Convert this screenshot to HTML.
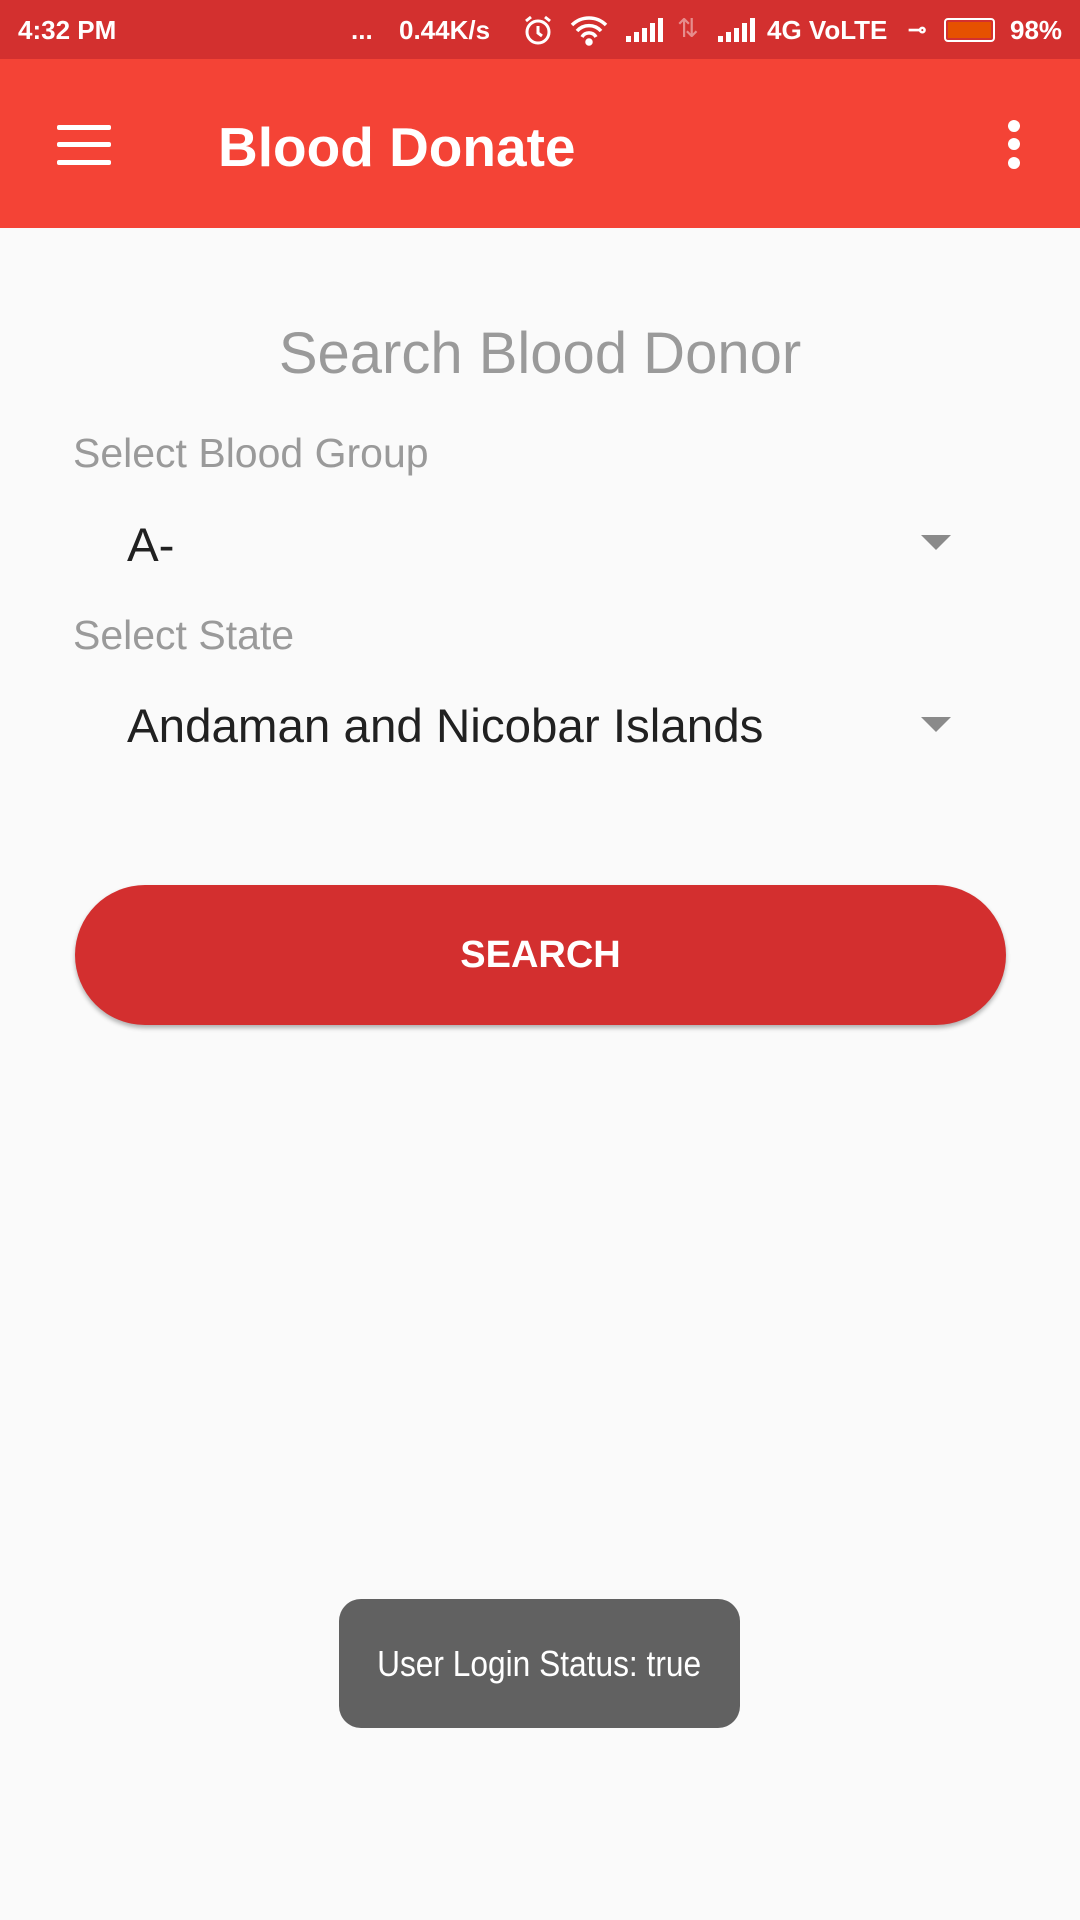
<!DOCTYPE html>
<html><head><meta charset="utf-8"><style>
*{margin:0;padding:0;box-sizing:border-box}
body{width:1080px;height:1920px;background:#fafafa;font-family:"Liberation Sans",sans-serif;position:relative;overflow:hidden}
.abs{position:absolute}
#status{left:0;top:0;width:1080px;height:59px;background:#d3302f;color:#fff;font-weight:bold;font-size:26px}
#bar{left:0;top:59px;width:1080px;height:169px;background:#f44336}
.line{position:absolute;left:57px;width:54px;height:5px;background:#fff;border-radius:2px}
.dot{position:absolute;left:1008px;width:12px;height:12px;border-radius:50%;background:#fff}
.lbl{color:#9a9a9a;font-size:41px;left:73px}
.val{color:#212121;font-size:47.5px;left:127px}
.arr{width:0;height:0;border-left:15px solid transparent;border-right:15px solid transparent;border-top:15px solid #8a8a8a;left:921px}
.sig{position:absolute;bottom:17px;width:5px;background:#fff}
</style></head><body>
<div id="status" class="abs">
<span class="abs" style="left:18px;top:15px">4:32 PM</span>
<span class="abs" style="left:351px;top:15px">...</span>
<span class="abs" style="left:399px;top:15px">0.44K/s</span>
<svg class="abs" style="left:522px;top:14px" width="32" height="32" viewBox="0 0 32 32" fill="none" stroke="#fff" stroke-width="3"><circle cx="16" cy="18" r="11"/><path d="M16 12v7l4 3M4 7l5-4M28 7l-5-4"/></svg>
<svg class="abs" style="left:570px;top:14px" width="38" height="32" viewBox="0 0 38 32" fill="none" stroke="#fff" stroke-width="3.5"><path d="M2 11a24 24 0 0 1 34 0M7 17a16 16 0 0 1 24 0M12 23a8 8 0 0 1 14 0"/><circle cx="19" cy="28" r="2" fill="#fff"/></svg>
<div class="sig" style="left:626px;height:6px"></div><div class="sig" style="left:634px;height:10px"></div><div class="sig" style="left:642px;height:14px"></div><div class="sig" style="left:650px;height:19px"></div><div class="sig" style="left:658px;height:24px"></div>
<span class="abs" style="left:677px;top:13px;opacity:.45;font-weight:normal">⇅</span>
<div class="sig" style="left:718px;height:6px"></div><div class="sig" style="left:726px;height:10px"></div><div class="sig" style="left:734px;height:14px"></div><div class="sig" style="left:742px;height:19px"></div><div class="sig" style="left:750px;height:24px"></div>
<span class="abs" style="left:767px;top:15px">4G VoLTE</span>
<span class="abs" style="left:908px;top:17px;font-size:22px">⊸</span>
<div class="abs" style="left:944px;top:18px;width:51px;height:24px;border:2px solid #fff;border-radius:4px;padding:2px"><div style="width:100%;height:100%;background:#e65100"></div></div>
<span class="abs" style="left:1010px;top:15px">98%</span>
</div>
<div id="bar" class="abs">
<div class="line" style="top:66px"></div><div class="line" style="top:83px"></div><div class="line" style="top:101px"></div>
<div class="abs" style="left:218px;top:56px;color:#fff;font-size:55px;font-weight:bold">Blood Donate</div>
<div class="dot" style="top:61px"></div><div class="dot" style="top:79px"></div><div class="dot" style="top:98px"></div>
</div>
<div class="abs" style="left:0;width:1080px;top:320px;text-align:center;color:#9a9a9a;font-size:58px">Search Blood Donor</div>
<div class="abs lbl" style="top:430px">Select Blood Group</div>
<div class="abs val" style="top:518px">A-</div>
<div class="abs arr" style="top:535px"></div>
<div class="abs lbl" style="top:612px">Select State</div>
<div class="abs val" style="top:699px">Andaman and Nicobar Islands</div>
<div class="abs arr" style="top:717px"></div>
<div class="abs" style="left:75px;top:885px;width:931px;height:140px;border-radius:70px;background:#d32f2f;box-shadow:0 3px 5px rgba(0,0,0,.3);color:#fff;font-size:38px;font-weight:bold;text-align:center;line-height:140px">SEARCH</div>
<div class="abs" style="left:339px;top:1599px;width:401px;height:129px;border-radius:22px;background:#616161;color:#fff;font-size:36px;text-align:center;line-height:129px"><span style="display:inline-block;transform:scaleX(0.88)">User Login Status: true</span></div>
</body></html>
